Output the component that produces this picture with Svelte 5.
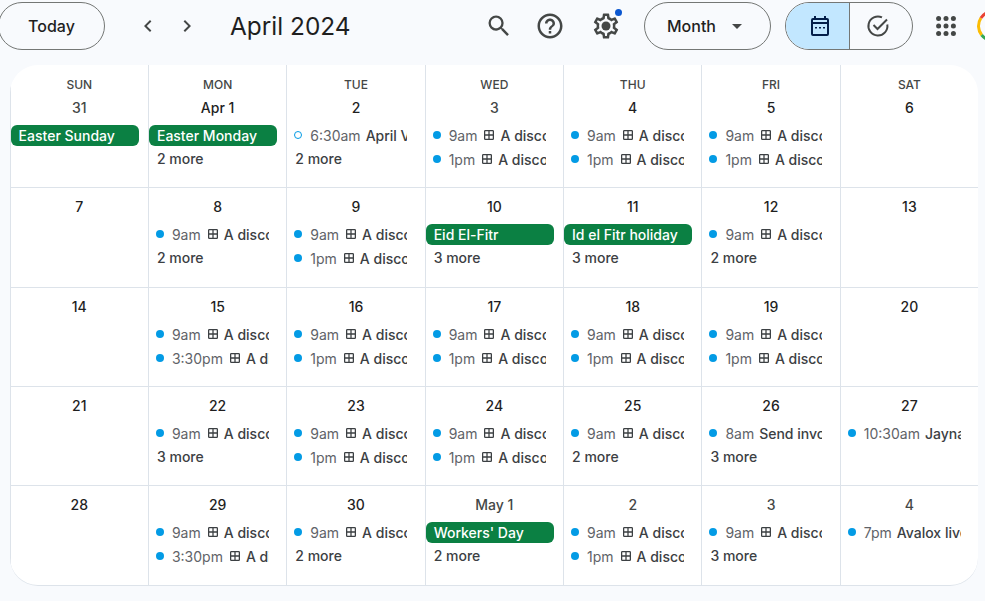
<script>
  const disc = (time) => ({ time, table: true, title: 'A discovery call' });
  const nine = disc('9am');
  const one = disc('1pm');
  const half = disc('3:30pm');

  const weeks = [
    [
      { head: 'SUN', date: '31', muted: true, chip: 'Easter Sunday' },
      { head: 'MON', date: 'Apr 1', chip: 'Easter Monday', more: 2 },
      { head: 'TUE', date: '2', events: [{ time: '6:30am', title: 'April Vendor call', hollow: true }], more: 2 },
      { head: 'WED', date: '3', muted: true, events: [nine, one] },
      { head: 'THU', date: '4', events: [nine, one] },
      { head: 'FRI', date: '5', events: [nine, one] },
      { head: 'SAT', date: '6' }
    ],
    [
      { date: '7' },
      { date: '8', events: [nine], more: 2 },
      { date: '9', events: [nine, one] },
      { date: '10', chip: 'Eid El-Fitr', more: 3 },
      { date: '11', chip: 'Id el Fitr holiday', more: 3 },
      { date: '12', events: [nine], more: 2 },
      { date: '13' }
    ],
    [
      { date: '14' },
      { date: '15', events: [nine, half] },
      { date: '16', events: [nine, one] },
      { date: '17', events: [nine, one] },
      { date: '18', events: [nine, one] },
      { date: '19', events: [nine, one] },
      { date: '20' }
    ],
    [
      { date: '21' },
      { date: '22', events: [nine], more: 3 },
      { date: '23', events: [nine, one] },
      { date: '24', events: [nine, one] },
      { date: '25', events: [nine], more: 2 },
      { date: '26', events: [{ time: '8am', title: 'Send invoices' }], more: 3 },
      { date: '27', events: [{ time: '10:30am', title: 'Jayna call' }] }
    ],
    [
      { date: '28' },
      { date: '29', events: [nine, half] },
      { date: '30', events: [nine], more: 2 },
      { date: 'May 1', muted: true, chip: "Workers' Day", more: 2 },
      { date: '2', muted: true, events: [nine, one] },
      { date: '3', muted: true, events: [nine], more: 3 },
      { date: '4', muted: true, events: [{ time: '7pm', title: 'Avalox live' }] }
    ]
  ];
</script>

<div class="page">
  <header class="topbar">
    <button class="pill today">Today</button>
    <div class="nav">
      <svg width="24" height="24" viewBox="0 0 24 24"><path d="M15.4 7.4 14 6l-6 6 6 6 1.400-1.400L10.800 12z" /></svg>
      <svg width="24" height="24" viewBox="0 0 24 24"><path d="M8.600 7.400 10 6l6 6-6 6-1.400-1.400 4.600-4.600z" /></svg>
    </div>
    <h1>April 2024</h1>
    <div class="tools">
      <svg class="search" width="28" height="28" viewBox="0 0 24 24"><path d="M15.5 14h-.79l-.28-.27A6.471 6.471 0 0 0 16 9.5 6.5 6.5 0 1 0 9.5 16c1.61 0 3.09-.59 4.23-1.57l.27.28v.79l5 4.99L20.49 19l-4.99-5zm-6 0C7.01 14 5 11.99 5 9.5S7.01 5 9.5 5 14 7.01 14 9.5 11.99 14 9.5 14z" /></svg>
      <svg class="help" width="30" height="30" viewBox="0 0 24 24"><path d="M11 18h2v-2h-2v2zm1-16C6.48 2 2 6.48 2 12s4.48 10 10 10 10-4.48 10-10S17.52 2 12 2zm0 18c-4.41 0-8-3.59-8-8s3.59-8 8-8 8 3.59 8 8-3.59 8-8 8zm0-14c-2.21 0-4 1.79-4 4h2c0-1.1.9-2 2-2s2 .9 2 2c0 2-3 1.75-3 5h2c0-2.25 3-2.5 3-5 0-2.21-1.79-4-4-4z" /></svg>
      <div class="gear">
        <svg width="30" height="30" viewBox="0 0 24 24"><path d="M19.43 12.98c.04-.32.07-.64.07-.98 0-.34-.03-.66-.07-.98l2.11-1.65c.19-.15.24-.42.12-.64l-2-3.46a.5.5 0 0 0-.61-.22l-2.49 1c-.52-.4-1.08-.73-1.69-.98l-.38-2.65A.488.488 0 0 0 14 2h-4c-.25 0-.46.18-.49.42l-.38 2.65c-.61.25-1.17.59-1.69.98l-2.49-1a.566.566 0 0 0-.18-.03c-.17 0-.34.09-.43.25l-2 3.46c-.13.22-.07.49.12.64l2.11 1.65c-.04.32-.07.65-.07.98 0 .33.03.66.07.98l-2.11 1.65c-.19.15-.24.42-.12.64l2 3.46a.5.5 0 0 0 .61.22l2.49-1c.52.4 1.08.73 1.69.98l.38 2.65c.03.24.24.42.49.42h4c.25 0 .46-.18.49-.42l.38-2.65c.61-.25 1.17-.59 1.69-.98l2.49 1c.06.02.12.03.18.03.17 0 .34-.09.43-.25l2-3.46c.12-.22.07-.49-.12-.64l-2.11-1.65zm-1.98-1.71c.04.31.05.52.05.73 0 .21-.02.43-.05.73l-.14 1.13.89.7 1.08.84-.7 1.21-1.27-.51-1.04-.42-.9.68c-.43.32-.84.56-1.25.73l-1.06.43-.16 1.13-.2 1.35h-1.4l-.19-1.35-.16-1.13-1.06-.43c-.43-.18-.83-.41-1.23-.71l-.91-.7-1.06.43-1.27.51-.7-1.21 1.08-.84.89-.7-.14-1.13c-.03-.31-.05-.54-.05-.74s.02-.43.05-.73l.14-1.13-.89-.7-1.08-.84.7-1.21 1.27.51 1.04.42.9-.68c.43-.32.84-.56 1.25-.73l1.06-.43.16-1.13.2-1.35h1.39l.19 1.35.16 1.13 1.06.43c.43.18.83.41 1.23.71l.91.7 1.06-.43 1.27-.51.7 1.21-1.07.85-.89.7.14 1.13z" /><circle cx="12" cy="12" r="3.600" /></svg>
        <span class="badge"></span>
      </div>
    </div>
    <button class="pill month">Month <span class="caret"></span></button>
    <div class="segment">
      <div class="seg on">
        <svg width="24" height="24" viewBox="0 0 24 24"><path d="M19 4h-1V2h-2v2H8V2H6v2H5a2 2 0 0 0-2 2v14a2 2 0 0 0 2 2h14a2 2 0 0 0 2-2V6a2 2 0 0 0-2-2zm0 16H5V10h14v10zM5 8V6h14v2H5zm2 5h2v1.500H7zm4 0h2v1.500h-2zm4 0h2v1.500h-2z" /></svg>
      </div>
      <div class="seg">
        <svg width="24" height="24" viewBox="0 0 24 24" fill="none" stroke="#444746" stroke-width="2"><path d="M21.300 10.500A9.500 9.500 0 1 1 16 3.400" /><path d="m7.500 11 4 4 9.500-9.500" /></svg>
      </div>
    </div>
    <svg class="apps" width="22" height="22" viewBox="0 0 22 22">
      {#each [3.600, 11, 18.400] as y}
        {#each [3.600, 11, 18.400] as x}
          <circle cx={x} cy={y} r="2.500" />
        {/each}
      {/each}
    </svg>
    <svg class="avatar" width="34" height="34" viewBox="0 0 34 34" fill="none" stroke-width="3">
      <path d="M4.650 26A14.500 14.500 0 0 1 3.900 9" stroke="#fbbc04" />
      <path d="M3.900 9A14.500 14.500 0 0 1 16 2.500" stroke="#ea4335" />
      <path d="M16 31.500A14.500 14.500 0 0 1 4.650 26" stroke="#34a853" />
    </svg>
  </header>

  <main class="calendar">
    {#each weeks as week, w}
      {#each week as day, d}
        <div class="cell" class:first={w === 0} class:edge={d === 0}>
          {#if day.head}<div class="head">{day.head}</div>{/if}
          <div class="date" class:muted={day.muted}>{day.date}</div>
          <div class="items">
            {#if day.chip}<div class="chip">{day.chip}</div>{/if}
            {#each day.events ?? [] as ev}
              <div class="event">
                <span class="dot" class:hollow={ev.hollow}></span>
                <span class="time">{ev.time}</span>
                {#if ev.table}
                  <svg class="table" width="10" height="10" viewBox="0 0 11 11" fill="none" stroke="#3c4043" stroke-width="1.400"><rect x=".7" y=".7" width="9.600" height="9.600" rx=".8" /><path d="M5.500 1v9M1 5.500h9" /></svg>
                {/if}
                <span class="title">{ev.title}</span>
              </div>
            {/each}
            {#if day.more}<div class="more">{day.more} more</div>{/if}
          </div>
        </div>
      {/each}
    {/each}
  </main>
</div>

<style>
  :global(body) { background: #f8fafd; overflow: hidden; }
  .page { width: 985px; height: 601px; overflow: hidden; font-family: Inter, "Liberation Sans", sans-serif; color: #1f1f1f; }

  .topbar { width: 1020px; height: 65px; display: flex; align-items: flex-start; padding-top: 2px; box-sizing: border-box; margin-left: -2px; }
  .topbar > * { flex: none; }
  .pill { height: 48px; border: 1px solid #747775; border-radius: 24px; background: transparent; font: 500 16px Inter, sans-serif; color: #1f1f1f; padding: 0; }
  .today { width: 107px; }
  .nav { display: flex; gap: 15px; margin: 12px 0 0 31px; }
  .nav svg { fill: #444746; }
  h1 { margin: 6px 0 0 31px; font-size: 24.400px; line-height: 36px; font-weight: 400; width: 255px; white-space: nowrap; }
  .tools { display: flex; align-items: center; height: 48px; fill: #444746; width: 159px; }
  .help { margin-left: 22px; }
  .gear { position: relative; margin-left: 26px; height: 30px; }
  .badge { position: absolute; top: -2px; right: -1px; width: 7px; height: 7px; border-radius: 50%; background: #0b57d0; }
  .month { width: 127px; display: flex; align-items: center; padding-left: 22px; gap: 16px; }
  .caret { border: 5px solid transparent; border-top-color: #444746; border-bottom: 0; }
  .segment { display: flex; margin-left: 14px; height: 48px; width: 128px; box-sizing: border-box; border: 1px solid #747775; border-radius: 24px; overflow: hidden; }
  .seg { flex: 1; display: flex; align-items: center; justify-content: center; padding-right: 6px; }
  .seg.on { flex: none; width: 64px; box-sizing: border-box; padding: 0 0 0 4px; background: #c2e7ff; border-right: 1px solid #747775; fill: #041e49; }
  .apps { margin: 13px 0 0 22px; fill: #444746; }
  .avatar { margin: 7px 0 0 20px; }

  .calendar { margin-left: 9.600px; width: 968.500px; height: 521px; display: grid; grid-template-columns: repeat(7, 1fr); grid-template-rows: 123px 100px 99px 99px 100px; background: #fff; border-radius: 28px; border-bottom: 1px solid #dde3ea; box-sizing: border-box; overflow: hidden; }
  .cell { border-left: 1px solid #dde3ea; border-bottom: 1px solid #dde3ea; text-align: center; min-width: 0; padding-top: 9px; overflow: hidden; }
  .cell.first { padding-top: 12px; }
  .head { font-size: 12px; font-weight: 500; line-height: 16px; color: #444746; margin-bottom: 5px; }
  .date { font-size: 14px; font-weight: 500; line-height: 20px; color: #1f1f1f; }
  .date.muted { color: #444746; }
  .items { margin-top: 5px; text-align: left; display: flow-root; }
  .chip { height: 21px; margin: 2px 9px 1px 0; padding-left: 8px; line-height: 21px; border-radius: 6px; background: #0b8043; color: #fff; font-size: 14px; font-weight: 500; white-space: nowrap; overflow: hidden; }
  .event { display: flex; align-items: center; height: 24px; width: 113px; padding-left: 7px; font-size: 14px; white-space: nowrap; overflow: hidden; }
  .dot { flex: none; width: 8px; height: 8px; margin-right: 8px; border-radius: 50%; background: #039be5; box-sizing: border-box; }
  .dot.hollow { background: none; border: 1.500px solid #039be5; }
  .time { color: #5f6368; margin-right: 5px; flex: none; }
  .table { flex: none; margin: 0 6px 0 2px; }
  .title { font-weight: 500; color: #3c4043; flex: none; }
  .more { height: 24px; line-height: 24px; padding-left: 8px; font-size: 14px; font-weight: 500; color: #3c4043; }
</style>
